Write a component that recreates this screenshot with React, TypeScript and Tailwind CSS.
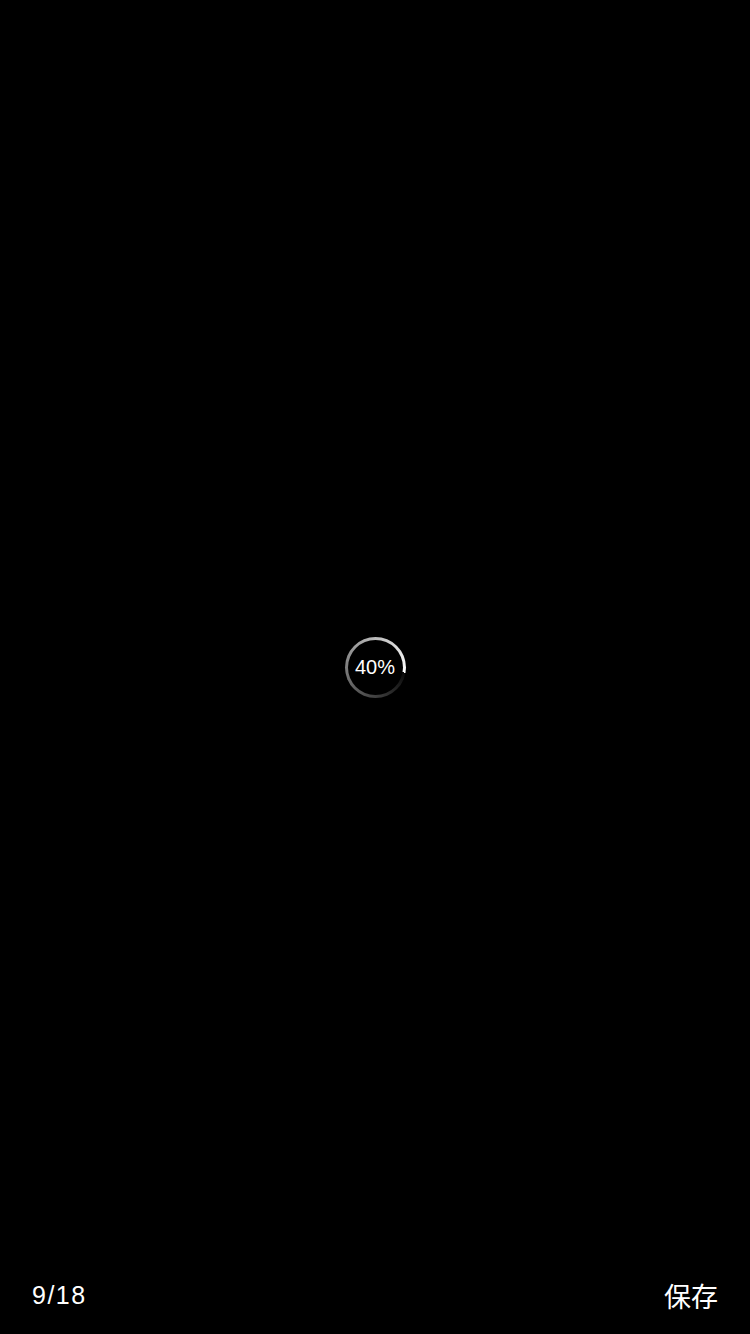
import React from "react";

function ProgressRing({ percent }: { percent: number }) {
  return (
    <div className="w-[61px] h-[61px] rounded-full p-[3px] bg-[conic-gradient(from_100deg,rgba(255,255,255,0.04),#ffffff_360deg)]">
      <div className="w-full h-full rounded-full bg-black flex items-center justify-center">
        <span className="text-white text-[20px] leading-none font-['Liberation_Sans',Arial,sans-serif]">
          {percent}%
        </span>
      </div>
    </div>
  );
}

export default function App() {
  return (
    <div className="w-[750px] h-[1334px] bg-black flex flex-col overflow-hidden">
      <div className="h-[76px]" />
      <main className="flex-1 flex items-center justify-center">
        <ProgressRing percent={40} />
      </main>
      <footer className="h-[76px] px-8 flex items-center justify-between text-white">
        <span className="text-[25px] tracking-[1.5px] font-['Liberation_Sans',Arial,sans-serif]">
          9/18
        </span>
        <button className="text-[27px] font-['Noto_Sans_CJK_SC','Noto_Sans',sans-serif]">
          保存
        </button>
      </footer>
    </div>
  );
}
